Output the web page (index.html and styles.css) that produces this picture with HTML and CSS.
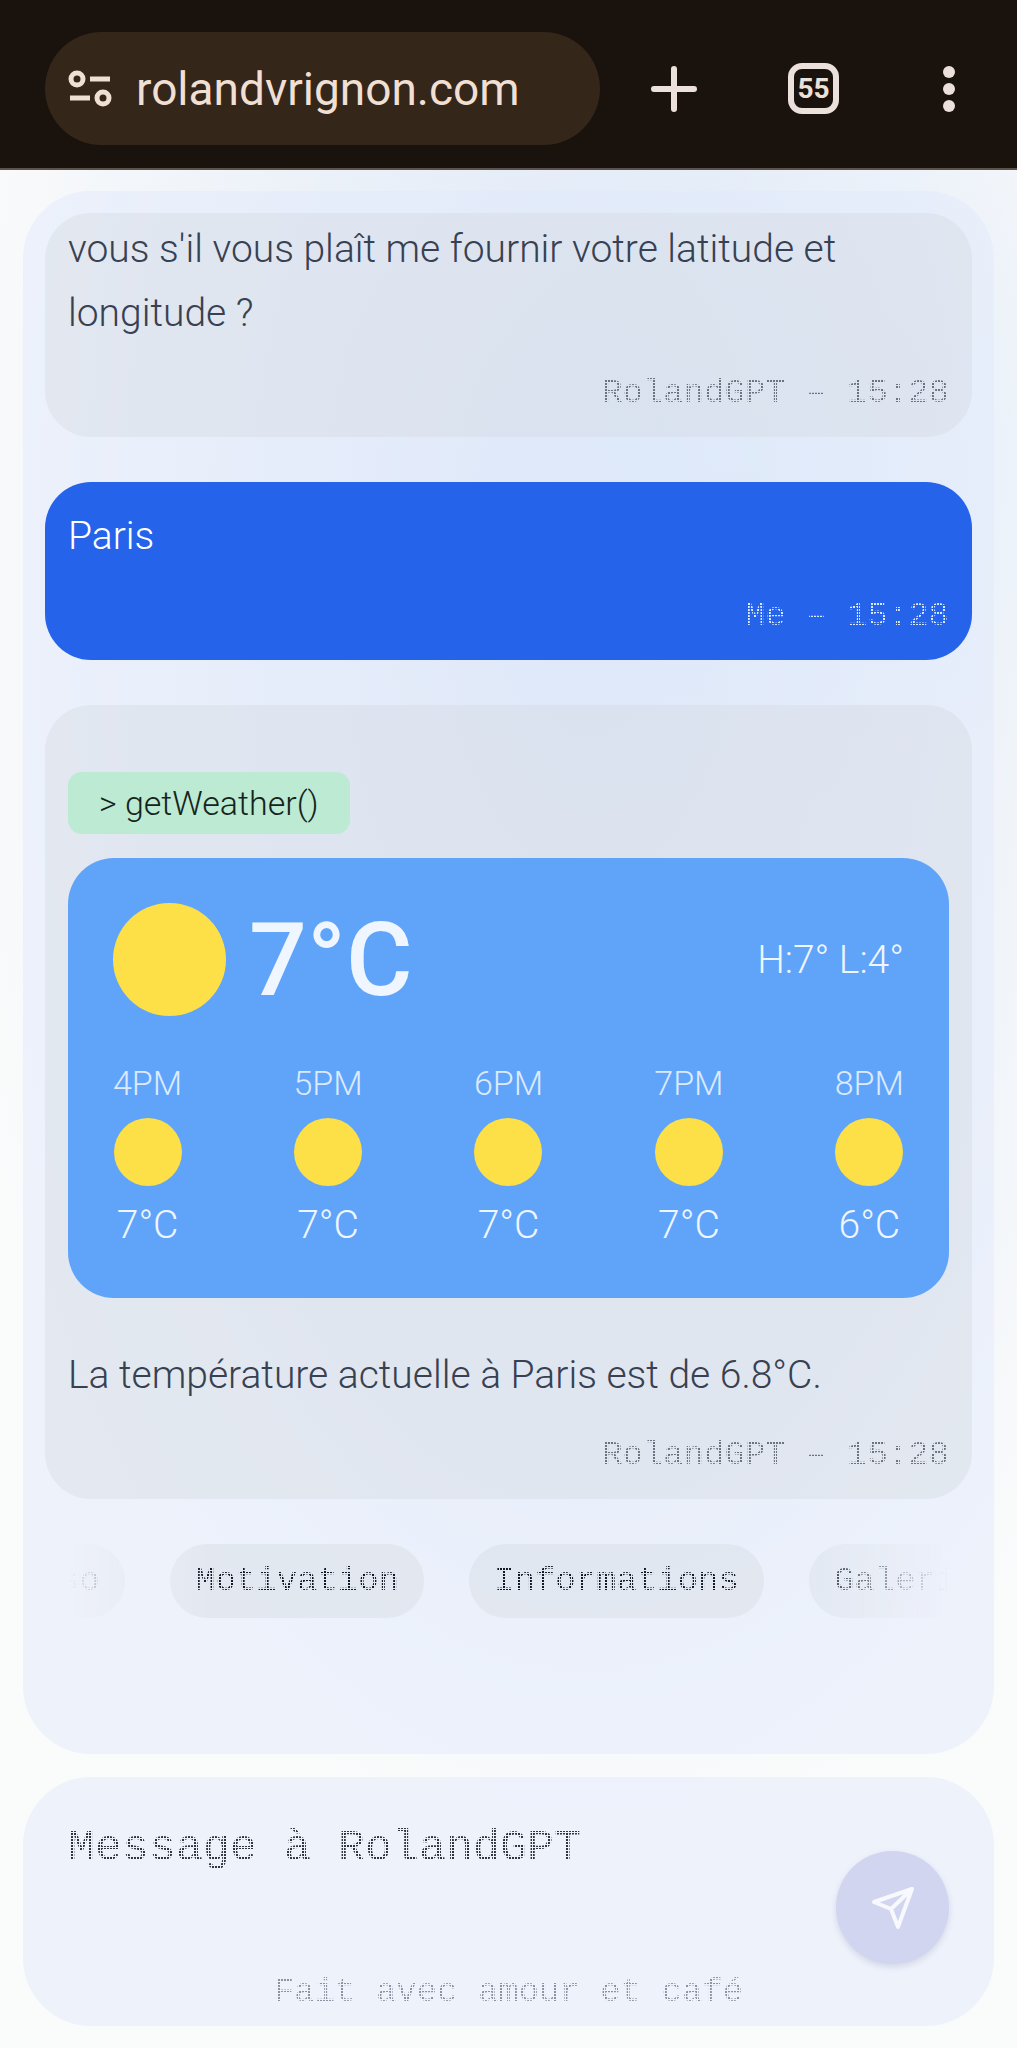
FILE: index.html
```html
<!DOCTYPE html>
<html lang="fr">
<head>
<meta charset="utf-8">
<meta name="viewport" content="width=device-width, initial-scale=1">
<title>RolandGPT</title>
<link rel="stylesheet" href="styles.css">
</head>
<body>
<header class="browser-bar">
  <button class="address" type="button">
    <svg class="address-icon" viewBox="0 0 44 38" aria-hidden="true">
      <g fill="none" stroke="currentColor" stroke-width="5">
        <circle cx="9" cy="9" r="6"/><path d="M22 9h20M2 28h20"/><circle cx="35" cy="28" r="6"/>
      </g>
    </svg>
    <span>rolandvrignon.com</span>
  </button>
  <div class="browser-actions">
    <button class="bar-button" type="button" aria-label="Nouvel onglet">
      <svg width="48" height="48" viewBox="0 0 48 48"><path d="M24 4v40M4 24h40" stroke="currentColor" stroke-width="6" stroke-linecap="round"/></svg>
    </button>
    <button class="bar-button tabs" type="button" aria-label="55 onglets">55</button>
    <button class="bar-button" type="button" aria-label="Menu">
      <svg width="40" height="48" viewBox="0 0 40 48" fill="currentColor"><circle cx="20" cy="7" r="6"/><circle cx="20" cy="24" r="6"/><circle cx="20" cy="41" r="6"/></svg>
    </button>
  </div>
</header>
<div class="app">
  <main class="panel chat">
    <article class="message message-partial">
      <p>vous s'il vous plaît me fournir votre latitude et longitude ?</p>
      <footer class="meta dots">RolandGPT – 15:28</footer>
    </article>
    <article class="message message-me">
      <p>Paris</p>
      <footer class="meta dots">Me – 15:28</footer>
    </article>
    <article class="message">
      <div class="call">&gt; getWeather()</div>
      <section class="weather">
        <div class="now">
          <span class="sun sun-large"></span>
          <strong class="now-temp">7°C</strong>
          <span class="range">H:7° L:4°</span>
        </div>
        <ul class="hours">
          <li><span class="hour">4PM</span><span class="sun"></span><span class="temp">7°C</span></li>
          <li><span class="hour">5PM</span><span class="sun"></span><span class="temp">7°C</span></li>
          <li><span class="hour">6PM</span><span class="sun"></span><span class="temp">7°C</span></li>
          <li><span class="hour">7PM</span><span class="sun"></span><span class="temp">7°C</span></li>
          <li><span class="hour">8PM</span><span class="sun"></span><span class="temp">6°C</span></li>
        </ul>
      </section>
      <p>La température actuelle à Paris est de 6.8°C.</p>
      <footer class="meta dots">RolandGPT – 15:28</footer>
    </article>
    <nav class="chips" aria-label="Suggestions">
      <div class="chips-track">
        <button class="chip" type="button"><span class="dots">Perso</span></button>
        <button class="chip" type="button"><span class="dots">Motivation</span></button>
        <button class="chip" type="button"><span class="dots">Informations</span></button>
        <button class="chip" type="button"><span class="dots">Galerie</span></button>
      </div>
    </nav>
  </main>
  <form class="panel composer">
    <div class="composer-row">
      <textarea class="prompt" rows="1" aria-label="Message" placeholder="Message à RolandGPT"></textarea>
      <button class="send" type="button" aria-label="Envoyer">
        <svg width="46" height="46" viewBox="0 0 46 46" fill="none" stroke="currentColor" stroke-width="4" stroke-linejoin="round" stroke-linecap="round"><path d="M42 4 4 17l17 7 7 18L42 4 21 24"/></svg>
      </button>
    </div>
    <p class="credit dots">Fait avec amour et café</p>
  </form>
</div>
</body>
</html>
```

FILE: styles.css
```css
* { box-sizing: border-box; }

body {
  margin: 0;
  min-height: 100vh;
  background: #fafbfb;
  color: #374151;
  font: 300 39px/64px Roboto, "Liberation Sans", sans-serif;
}

p { margin: 0; }

button, textarea {
  margin: 0;
  padding: 0;
  border: 0;
  background: none;
  color: inherit;
  font: inherit;
}

/* Browser chrome */
.browser-bar {
  display: flex;
  align-items: center;
  gap: 50px;
  height: 170px;
  padding: 9px 48px 0 45px;
  border-bottom: 2px solid #5c534a;
  background: #1a120d;
  color: #ece0da;
}

.address {
  display: flex;
  align-items: center;
  gap: 24px;
  flex: 1;
  height: 113px;
  padding: 0 23px;
  border-radius: 57px;
  background: #35261a;
  color: #f0dfd3;
  font-size: 46px;
  font-weight: 400;
}

.address-icon { width: 44px; height: 38px; }

.browser-actions { display: flex; align-items: center; gap: 90px; }

.bar-button {
  display: flex;
  align-items: center;
  justify-content: center;
  height: 51px;
}

.tabs {
  width: 51px;
  border: 6px solid currentColor;
  border-radius: 14px;
  font-size: 28px;
  font-weight: 700;
  line-height: 32px;
}

/* Page */
.app {
  display: flex;
  flex-direction: column;
  gap: 23px;
  padding: 21px 23px 23px;
  background:
    radial-gradient(ellipse 420px 360px at 72% 15%, rgba(200, 230, 250, 0.25), transparent),
    radial-gradient(ellipse 660px 1300px at 58% 22%, rgba(205, 220, 244, 0.65), transparent);
}

.panel {
  border-radius: 68px;
  background: rgba(225, 234, 251, 0.5);
}

.chat {
  display: flex;
  flex-direction: column;
  gap: 45px;
  padding: 22px 22px 136px;
}

.message {
  display: flex;
  flex-direction: column;
  padding: 22px 23px;
  border-radius: 46px;
  background: rgba(209, 215, 221, 0.35);
}

.message-partial { padding-top: 4px; }

.message-me { background: #2563eb; color: #fff; }

/* Dot-matrix lettering: glyphs filled with a grid of 2px dots */
.dots {
  background-image: conic-gradient(at 2px 2px, transparent 75%, var(--ink, #6b7280) 0);
  background-size: 3px 3px;
  -webkit-background-clip: text;
  background-clip: text;
  color: transparent;
  font-family: "Liberation Mono", monospace;
  font-size: 34px;
  font-weight: 400;
  line-height: 44px;
}

.meta { align-self: flex-end; margin-top: 26px; }

.message-me .meta { --ink: #dbeafe; }

.call {
  align-self: flex-start;
  margin: 45px 0 24px;
  padding: 0 31px;
  border-radius: 14px;
  background: #bcead3;
  color: #14241c;
  font-size: 34px;
  line-height: 62px;
}

/* Weather */
.weather {
  display: flex;
  flex-direction: column;
  gap: 45px;
  margin-bottom: 45px;
  padding: 45px;
  border-radius: 46px;
  background: #60a4fa;
  color: #eff6ff;
}

.now { display: flex; align-items: center; gap: 23px; }

.now-temp { font-size: 102px; font-weight: 500; line-height: 112px; }

.range { margin-left: auto; }

.hours {
  display: flex;
  justify-content: space-between;
  margin: 0;
  padding: 0;
  list-style: none;
}

.hours li {
  display: flex;
  flex-direction: column;
  align-items: center;
  gap: 12px;
}

.hour { color: #dbeafe; font-size: 34px; line-height: 45px; }

.temp { line-height: 55px; }

.sun {
  width: 68px;
  height: 68px;
  border-radius: 50%;
  background: #fde047;
}

.sun-large { width: 113px; height: 113px; }

/* Suggestions */
.chips {
  margin: 0 23px;
  overflow: hidden;
  -webkit-mask-image: linear-gradient(90deg, transparent, #000 16%, #000 82%, transparent);
  mask-image: linear-gradient(90deg, transparent, #000 16%, #000 82%, transparent);
}

.chips-track {
  display: flex;
  gap: 45px;
  margin-left: -95px;
}

.chip {
  --ink: #111827;
  display: flex;
  align-items: center;
  flex: none;
  height: 74px;
  padding: 0 25px;
  border-radius: 37px;
  background: rgba(209, 215, 221, 0.35);
}

/* Composer */
.composer { padding: 38px 45px 12px; }

.composer-row { display: flex; gap: 23px; }

.prompt {
  flex: 1;
  min-width: 0;
  height: 68px;
  outline: 0;
  resize: none;
  overflow: hidden;
  font-family: "Liberation Mono", monospace;
  font-size: 45px;
  font-weight: 400;
  line-height: 68px;
}

.prompt::placeholder {
  opacity: 1;
  background-image: conic-gradient(at 2px 2px, transparent 75%, #30343e 0);
  background-size: 3px 3px;
  -webkit-background-clip: text;
  background-clip: text;
  color: transparent;
}

.send {
  display: flex;
  align-items: center;
  justify-content: center;
  width: 113px;
  height: 113px;
  margin-top: 36px;
  border-radius: 50%;
  background: #d1d5f0;
  box-shadow: 0 3px 6px rgba(100, 110, 150, 0.2);
  color: #f8f9fe;
}

.credit { --ink: #8b93a1; margin-top: 6px; text-align: center; }
```
